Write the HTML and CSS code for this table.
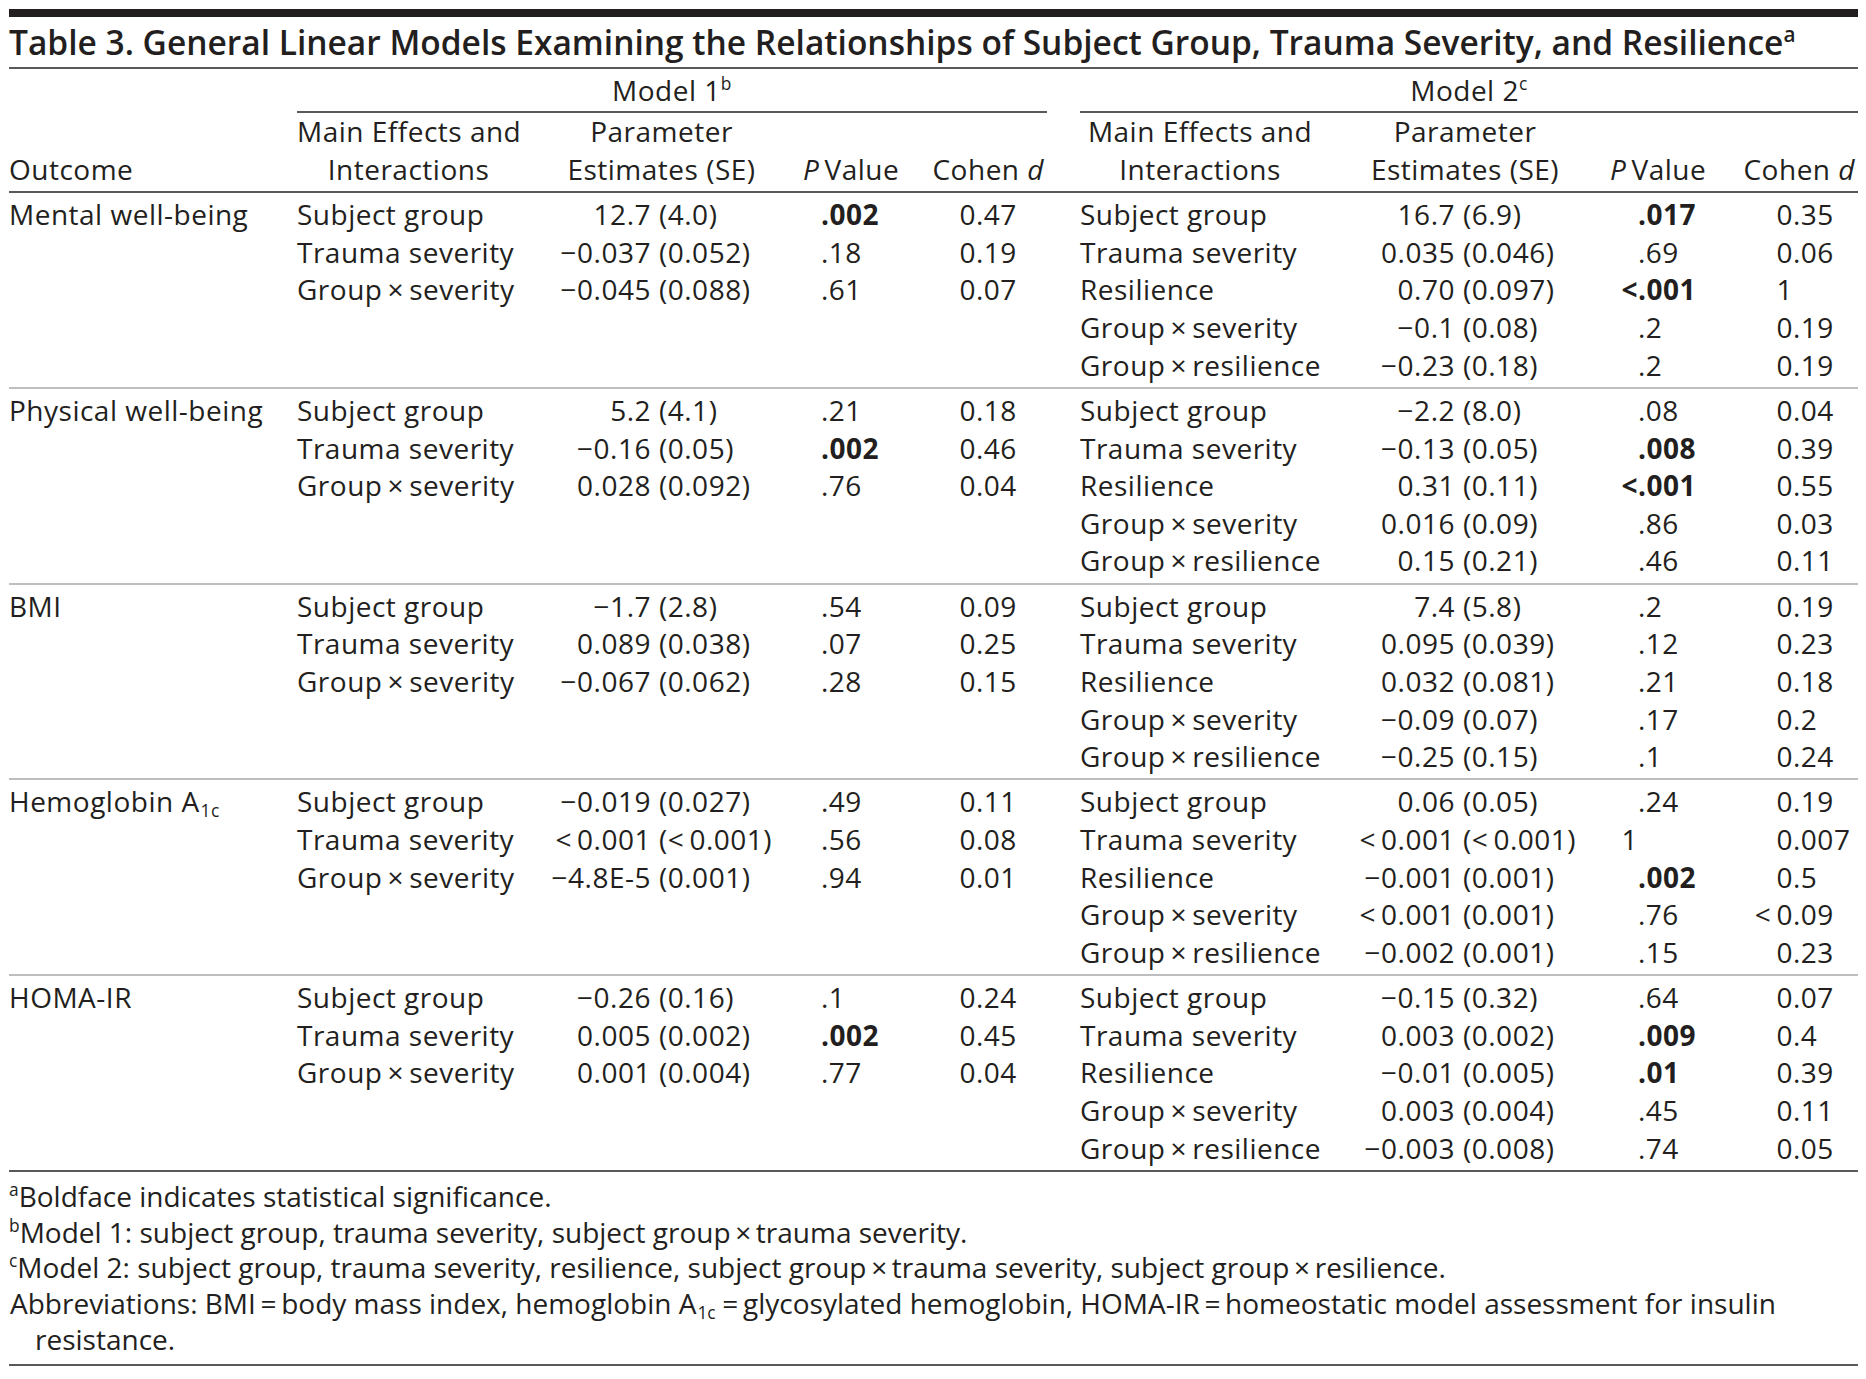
FILE: index.html
```html
<!DOCTYPE html>
<html lang="en">
<head>
<meta charset="utf-8">
<title>Table 3</title>
<link rel="stylesheet" href="styles.css">
</head>
<body>
<div class="page">
  <div class="topbar"></div>
  <h1 class="title">Table 3. General Linear Models Examining the Relationships of Subject Group, Trauma Severity, and Resilience<sup>a</sup></h1>

  <div class="tbl">
  <div class="row mrow">
    <div class="outc"></div>
    <div class="m1 mlabel">Model 1<sup>b</sup></div>
    <div class="gap"></div>
    <div class="m2 mlabel">Model 2<sup>c</sup></div>
  </div>

  <div class="row hdr">
    <div class="outc hcell">Outcome</div>
    <div class="m1 grid">
      <div class="hc ctr">Main Effects and<br>Interactions</div>
      <div class="hc ctr">Parameter<br>Estimates (SE)</div>
      <div class="hc"><i>P</i>&#8201;Value</div>
      <div class="hc rgt">Cohen <i>d</i></div>
    </div>
    <div class="gap"></div>
    <div class="m2 grid">
      <div class="hc ctr">Main Effects and<br>Interactions</div>
      <div class="hc ctr">Parameter<br>Estimates (SE)</div>
      <div class="hc"><i>P</i>&#8201;Value</div>
      <div class="hc rgt">Cohen <i>d</i></div>
    </div>
  </div>

  <!-- Mental well-being -->
  <div class="row sec">
    <div class="outc">Mental well-being</div>
    <div class="m1 grid">
      <div>Subject group</div><div class="est"><span class="e">12.7</span>(4.0)</div><div class="p b"><span class="i"></span>.002</div><div class="d"><span class="i">0</span>.47</div>
      <div>Trauma severity</div><div class="est"><span class="e">&minus;0.037</span>(0.052)</div><div class="p"><span class="i"></span>.18</div><div class="d"><span class="i">0</span>.19</div>
      <div>Group&#8201;&times;&#8201;severity</div><div class="est"><span class="e">&minus;0.045</span>(0.088)</div><div class="p"><span class="i"></span>.61</div><div class="d"><span class="i">0</span>.07</div>
    </div>
    <div class="gap"></div>
    <div class="m2 grid">
      <div>Subject group</div><div class="est"><span class="e">16.7</span>(6.9)</div><div class="p b"><span class="i"></span>.017</div><div class="d"><span class="i">0</span>.35</div>
      <div>Trauma severity</div><div class="est"><span class="e">0.035</span>(0.046)</div><div class="p"><span class="i"></span>.69</div><div class="d"><span class="i">0</span>.06</div>
      <div>Resilience</div><div class="est"><span class="e">0.70</span>(0.097)</div><div class="p b"><span class="i">&lt;</span>.001</div><div class="d"><span class="i">1</span></div>
      <div>Group&#8201;&times;&#8201;severity</div><div class="est"><span class="e">&minus;0.1</span>(0.08)</div><div class="p"><span class="i"></span>.2</div><div class="d"><span class="i">0</span>.19</div>
      <div>Group&#8201;&times;&#8201;resilience</div><div class="est"><span class="e">&minus;0.23</span>(0.18)</div><div class="p"><span class="i"></span>.2</div><div class="d"><span class="i">0</span>.19</div>
    </div>
  </div>

  <!-- Physical well-being -->
  <div class="row sec">
    <div class="outc">Physical well-being</div>
    <div class="m1 grid">
      <div>Subject group</div><div class="est"><span class="e">5.2</span>(4.1)</div><div class="p"><span class="i"></span>.21</div><div class="d"><span class="i">0</span>.18</div>
      <div>Trauma severity</div><div class="est"><span class="e">&minus;0.16</span>(0.05)</div><div class="p b"><span class="i"></span>.002</div><div class="d"><span class="i">0</span>.46</div>
      <div>Group&#8201;&times;&#8201;severity</div><div class="est"><span class="e">0.028</span>(0.092)</div><div class="p"><span class="i"></span>.76</div><div class="d"><span class="i">0</span>.04</div>
    </div>
    <div class="gap"></div>
    <div class="m2 grid">
      <div>Subject group</div><div class="est"><span class="e">&minus;2.2</span>(8.0)</div><div class="p"><span class="i"></span>.08</div><div class="d"><span class="i">0</span>.04</div>
      <div>Trauma severity</div><div class="est"><span class="e">&minus;0.13</span>(0.05)</div><div class="p b"><span class="i"></span>.008</div><div class="d"><span class="i">0</span>.39</div>
      <div>Resilience</div><div class="est"><span class="e">0.31</span>(0.11)</div><div class="p b"><span class="i">&lt;</span>.001</div><div class="d"><span class="i">0</span>.55</div>
      <div>Group&#8201;&times;&#8201;severity</div><div class="est"><span class="e">0.016</span>(0.09)</div><div class="p"><span class="i"></span>.86</div><div class="d"><span class="i">0</span>.03</div>
      <div>Group&#8201;&times;&#8201;resilience</div><div class="est"><span class="e">0.15</span>(0.21)</div><div class="p"><span class="i"></span>.46</div><div class="d"><span class="i">0</span>.11</div>
    </div>
  </div>

  <!-- BMI -->
  <div class="row sec">
    <div class="outc">BMI</div>
    <div class="m1 grid">
      <div>Subject group</div><div class="est"><span class="e">&minus;1.7</span>(2.8)</div><div class="p"><span class="i"></span>.54</div><div class="d"><span class="i">0</span>.09</div>
      <div>Trauma severity</div><div class="est"><span class="e">0.089</span>(0.038)</div><div class="p"><span class="i"></span>.07</div><div class="d"><span class="i">0</span>.25</div>
      <div>Group&#8201;&times;&#8201;severity</div><div class="est"><span class="e">&minus;0.067</span>(0.062)</div><div class="p"><span class="i"></span>.28</div><div class="d"><span class="i">0</span>.15</div>
    </div>
    <div class="gap"></div>
    <div class="m2 grid">
      <div>Subject group</div><div class="est"><span class="e">7.4</span>(5.8)</div><div class="p"><span class="i"></span>.2</div><div class="d"><span class="i">0</span>.19</div>
      <div>Trauma severity</div><div class="est"><span class="e">0.095</span>(0.039)</div><div class="p"><span class="i"></span>.12</div><div class="d"><span class="i">0</span>.23</div>
      <div>Resilience</div><div class="est"><span class="e">0.032</span>(0.081)</div><div class="p"><span class="i"></span>.21</div><div class="d"><span class="i">0</span>.18</div>
      <div>Group&#8201;&times;&#8201;severity</div><div class="est"><span class="e">&minus;0.09</span>(0.07)</div><div class="p"><span class="i"></span>.17</div><div class="d"><span class="i">0</span>.2</div>
      <div>Group&#8201;&times;&#8201;resilience</div><div class="est"><span class="e">&minus;0.25</span>(0.15)</div><div class="p"><span class="i"></span>.1</div><div class="d"><span class="i">0</span>.24</div>
    </div>
  </div>

  <!-- Hemoglobin A1c -->
  <div class="row sec">
    <div class="outc">Hemoglobin A<sub>1c</sub></div>
    <div class="m1 grid">
      <div>Subject group</div><div class="est"><span class="e">&minus;0.019</span>(0.027)</div><div class="p"><span class="i"></span>.49</div><div class="d"><span class="i">0</span>.11</div>
      <div>Trauma severity</div><div class="est"><span class="e">&lt;&#8201;0.001</span>(&lt;&#8201;0.001)</div><div class="p"><span class="i"></span>.56</div><div class="d"><span class="i">0</span>.08</div>
      <div>Group&#8201;&times;&#8201;severity</div><div class="est"><span class="e">&minus;4.8E-5</span>(0.001)</div><div class="p"><span class="i"></span>.94</div><div class="d"><span class="i">0</span>.01</div>
    </div>
    <div class="gap"></div>
    <div class="m2 grid">
      <div>Subject group</div><div class="est"><span class="e">0.06</span>(0.05)</div><div class="p"><span class="i"></span>.24</div><div class="d"><span class="i">0</span>.19</div>
      <div>Trauma severity</div><div class="est"><span class="e">&lt;&#8201;0.001</span>(&lt;&#8201;0.001)</div><div class="p"><span class="i">1</span></div><div class="d"><span class="i">0</span>.007</div>
      <div>Resilience</div><div class="est"><span class="e">&minus;0.001</span>(0.001)</div><div class="p b"><span class="i"></span>.002</div><div class="d"><span class="i">0</span>.5</div>
      <div>Group&#8201;&times;&#8201;severity</div><div class="est"><span class="e">&lt;&#8201;0.001</span>(0.001)</div><div class="p"><span class="i"></span>.76</div><div class="d"><span class="i">&lt;&#8201;0</span>.09</div>
      <div>Group&#8201;&times;&#8201;resilience</div><div class="est"><span class="e">&minus;0.002</span>(0.001)</div><div class="p"><span class="i"></span>.15</div><div class="d"><span class="i">0</span>.23</div>
    </div>
  </div>

  <!-- HOMA-IR -->
  <div class="row sec last">
    <div class="outc">HOMA-IR</div>
    <div class="m1 grid">
      <div>Subject group</div><div class="est"><span class="e">&minus;0.26</span>(0.16)</div><div class="p"><span class="i"></span>.1</div><div class="d"><span class="i">0</span>.24</div>
      <div>Trauma severity</div><div class="est"><span class="e">0.005</span>(0.002)</div><div class="p b"><span class="i"></span>.002</div><div class="d"><span class="i">0</span>.45</div>
      <div>Group&#8201;&times;&#8201;severity</div><div class="est"><span class="e">0.001</span>(0.004)</div><div class="p"><span class="i"></span>.77</div><div class="d"><span class="i">0</span>.04</div>
    </div>
    <div class="gap"></div>
    <div class="m2 grid">
      <div>Subject group</div><div class="est"><span class="e">&minus;0.15</span>(0.32)</div><div class="p"><span class="i"></span>.64</div><div class="d"><span class="i">0</span>.07</div>
      <div>Trauma severity</div><div class="est"><span class="e">0.003</span>(0.002)</div><div class="p b"><span class="i"></span>.009</div><div class="d"><span class="i">0</span>.4</div>
      <div>Resilience</div><div class="est"><span class="e">&minus;0.01</span>(0.005)</div><div class="p b"><span class="i"></span>.01</div><div class="d"><span class="i">0</span>.39</div>
      <div>Group&#8201;&times;&#8201;severity</div><div class="est"><span class="e">0.003</span>(0.004)</div><div class="p"><span class="i"></span>.45</div><div class="d"><span class="i">0</span>.11</div>
      <div>Group&#8201;&times;&#8201;resilience</div><div class="est"><span class="e">&minus;0.003</span>(0.008)</div><div class="p"><span class="i"></span>.74</div><div class="d"><span class="i">0</span>.05</div>
    </div>
  </div>
  </div>

  <div class="notes">
    <p><sup>a</sup>Boldface indicates statistical significance.</p>
    <p><sup>b</sup>Model 1: subject group, trauma severity, subject group&#8201;&times;&#8201;trauma severity.</p>
    <p><sup>c</sup>Model 2: subject group, trauma severity, resilience, subject group&#8201;&times;&#8201;trauma severity, subject group&#8201;&times;&#8201;resilience.</p>
    <p class="abbr">Abbreviations: BMI&#8201;=&#8201;body mass index, hemoglobin A<sub>1c</sub>&#8201;=&#8201;glycosylated hemoglobin, HOMA-IR&#8201;=&#8201;homeostatic model assessment for insulin resistance.</p>
  </div>
</div>
</body>
</html>
```

FILE: styles.css
```css
* {
  box-sizing: border-box;
  margin: 0;
  padding: 0;
}

body {
  background: #ffffff;
  color: #231f20;
  font-family: "Open Sans", "Noto Sans", sans-serif;
  font-size: 28px;
}

.page {
  width: 1866px;
  padding: 9px 8px 0 9px;
}

.topbar {
  height: 8px;
  background: #231f20;
}

.title {
  font-size: 33.5px;
  font-weight: 600;
  line-height: 50px;
  white-space: nowrap;
  border-bottom: 2px solid #58595b;
}

sup {
  font-size: 0.62em;
  line-height: 0;
  vertical-align: 0.62em;
}

sub {
  font-size: 0.62em;
  line-height: 0;
  vertical-align: -0.28em;
  margin-left: 1px;
  margin-right: 2px;
}

.tbl {
  letter-spacing: 0.5px;
}

.row {
  display: flex;
}

.outc {
  width: 288px;
  flex: none;
}

.m1 {
  width: 750px;
  flex: none;
}

.gap {
  width: 33px;
  flex: none;
}

.m2 {
  width: 778px;
  flex: none;
}

.mlabel {
  text-align: center;
  line-height: 42px;
  border-bottom: 2px solid #58595b;
}

.grid {
  display: grid;
  grid-auto-rows: 37.6px;
}

.m1.grid {
  grid-template-columns: 223px 283px 112px 132px;
}

.m2.grid {
  grid-template-columns: 240px 290px 130px 118px;
}

.hdr {
  line-height: 37.6px;
  padding-bottom: 3px;
  border-bottom: 2px solid #58595b;
}

.hdr .grid {
  grid-auto-rows: auto;
  align-items: end;
}

.hcell {
  align-self: flex-end;
}

.hc {
  white-space: nowrap;
}

.ctr {
  text-align: center;
}

.rgt {
  text-align: right;
  padding-right: 3px;
}

.sec {
  line-height: 37.6px;
  padding: 3px 0 2.8px;
}

.sec + .sec {
  border-top: 2px solid #bcbec0;
}

.sec.last {
  border-bottom: 2px solid #58595b;
}

.grid > div {
  white-space: nowrap;
}

.est .e {
  display: inline-block;
  text-align: right;
  padding-right: 8px;
}

.m1 .est .e {
  width: 139px;
}

.m2 .est .e {
  width: 143px;
}

.p .i,
.d .i {
  display: inline-block;
  text-align: right;
}

.m1 .p .i {
  width: 18px;
}

.m2 .p .i {
  width: 28px;
}

.m1 .d .i {
  width: 61px;
}

.m2 .d .i {
  width: 53px;
}

.b {
  font-weight: 700;
}

.notes {
  padding: 7px 0 6px;
  line-height: 35.7px;
  border-bottom: 2px solid #58595b;
}

.abbr {
  padding-left: 26px;
  text-indent: -25px;
}
```
